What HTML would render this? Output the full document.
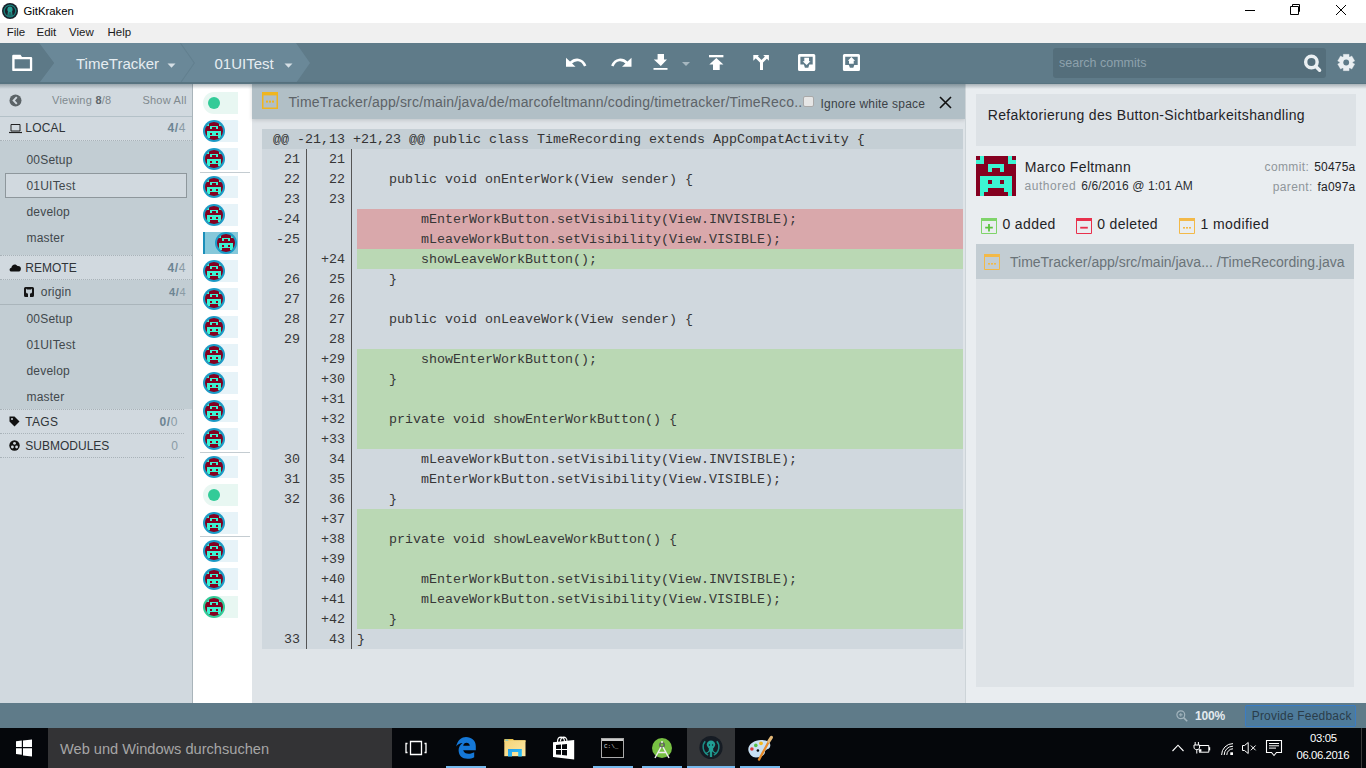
<!DOCTYPE html><html><head><meta charset="utf-8"><style>
*{margin:0;padding:0;box-sizing:border-box}
html,body{width:1366px;height:768px;overflow:hidden;background:#fff;font-family:"Liberation Sans",sans-serif}
.a{position:absolute}
.t{position:absolute;white-space:nowrap;line-height:1}
svg{position:absolute;overflow:visible}
</style></head><body>
<svg width="0" height="0" style="position:absolute"><defs><symbol id="rob" viewBox="0 0 10 10" shape-rendering="crispEdges"><rect width="10" height="10" fill="#850020"/><rect x="1" y="0" width="1" height="1" fill="#3cf4d2"/><rect x="8" y="0" width="1" height="1" fill="#3cf4d2"/><rect x="0" y="1" width="2" height="1" fill="#3cf4d2"/><rect x="8" y="1" width="2" height="1" fill="#3cf4d2"/><rect x="3" y="2" width="4" height="1" fill="#3cf4d2"/><rect x="3" y="3" width="1" height="1" fill="#3cf4d2"/><rect x="6" y="3" width="1" height="1" fill="#3cf4d2"/><rect x="1" y="5" width="8" height="1" fill="#3cf4d2"/><rect x="1" y="6" width="2" height="1" fill="#3cf4d2"/><rect x="4" y="6" width="2" height="1" fill="#3cf4d2"/><rect x="7" y="6" width="2" height="1" fill="#3cf4d2"/><rect x="1" y="7" width="8" height="1" fill="#3cf4d2"/><rect x="1" y="8" width="2" height="1" fill="#3cf4d2"/><rect x="7" y="8" width="2" height="1" fill="#3cf4d2"/><rect x="1" y="9" width="1" height="1" fill="#3cf4d2"/><rect x="8" y="9" width="1" height="1" fill="#3cf4d2"/></symbol></defs></svg>
<div class="a" style="left:0;top:0;width:1366px;height:23px;background:#fff"></div>
<svg style="left:2px;top:3px" width="16" height="16" viewBox="0 0 16 16"><circle cx="8" cy="8" r="8" fill="#19202b"/><circle cx="8" cy="8" r="5.8" fill="none" stroke="#17807a" stroke-width="1.3"/><ellipse cx="8" cy="6.6" rx="2.6" ry="3" fill="#27a096"/><path d="M6.4 9 L6 13 M8 9.5 V13.5 M9.6 9 L10 13" stroke="#27a096" stroke-width="1.1"/></svg>
<div class="t" style="left:23.5px;top:6.33px;font-size:11.3px;color:#000;">GitKraken</div>
<div class="a" style="left:1245px;top:10px;width:10px;height:1px;background:#000"></div>
<svg style="left:1289px;top:3px" width="12" height="13" viewBox="0 0 12 13"><path d="M1.5 3.5h8v8h-8z M3.5 3.5V1.5h7v7h-1" fill="none" stroke="#000" stroke-width="1"/></svg>
<svg style="left:1336px;top:5px" width="10" height="10" viewBox="0 0 10 10"><path d="M0 0L10 10M10 0L0 10" stroke="#000" stroke-width="1"/></svg>
<div class="a" style="left:0;top:23px;width:1366px;height:20px;background:#f0f0f0"></div>
<div class="t" style="left:6.7px;top:26.97px;font-size:11.5px;color:#1a1a1a;">File</div>
<div class="t" style="left:36.5px;top:26.97px;font-size:11.5px;color:#1a1a1a;">Edit</div>
<div class="t" style="left:69px;top:26.97px;font-size:11.5px;color:#1a1a1a;">View</div>
<div class="t" style="left:107.5px;top:26.97px;font-size:11.5px;color:#1a1a1a;">Help</div>
<div class="a" style="left:0;top:43px;width:1366px;height:40px;background:#5f7b89"></div>
<svg style="left:0;top:43px" width="320" height="40" viewBox="0 0 320 40"><polygon points="39,0 180,0 194,20 180,40 39,40 54,20" fill="#6a8898"/><polygon points="180,0 296,0 310,20 296,40 180,40 194,20" fill="#6a8898"/><polygon points="0,0 39,0 54,20 39,40 0,40" fill="#5d7987"/><path d="M180.5,0 L194.5,20 L180.5,40" fill="none" stroke="#62808f" stroke-width="1"/><rect x="0" y="39" width="320" height="1" fill="#587481"/></svg>
<svg style="left:0;top:0" width="60" height="83" viewBox="0 0 60 83"><path d="M12.2 56 Q12.2 54.8 13.4 54.8 H20.5 L22 56.9 H31 Q32.2 56.9 32.2 58.1 V69.9 Q32.2 71.1 31 71.1 H13.4 Q12.2 71.1 12.2 69.9 Z M14.6 59.2 H29.9 V68.6 H14.6 Z" fill="#fff" fill-rule="evenodd"/></svg>
<div class="t" style="left:76px;top:56.10px;font-size:15px;color:#e6edf1;">TimeTracker</div>
<svg style="left:166.7px;top:62.8px" width="10" height="6" viewBox="0 0 10 6"><path d="M0.5 0.5H8.5L4.5 4.8Z" fill="#d5dfe5"/></svg>
<div class="t" style="left:214.5px;top:56.10px;font-size:15px;color:#e6edf1;">01UITest</div>
<svg style="left:284px;top:62.8px" width="10" height="6" viewBox="0 0 10 6"><path d="M0.5 0.5H8.5L4.5 4.8Z" fill="#d5dfe5"/></svg>
<svg style="left:0;top:0" width="1366" height="83" viewBox="0 0 1366 83"><path d="M566 57.8 V66.7 H575.5 Z" fill="#fff"/><path d="M570.5 63 C575 58.5 582 58.5 585.2 66" fill="none" stroke="#fff" stroke-width="2.6"/><path d="M631.5 57.8 V66.7 H622 Z" fill="#fff"/><path d="M627 63 C622.5 58.5 615.5 58.5 612.3 66" fill="none" stroke="#fff" stroke-width="2.6"/><path d="M657.6 54 H664 V59.5 H667 L660.8 66 L653.8 59.5 H657.6 Z" fill="#fff"/><rect x="653.5" y="68" width="14" height="1.8" fill="#fff"/><path d="M682 62 H690 L686 66 Z" fill="#a6b7c0"/><rect x="709" y="55" width="14.4" height="2.3" fill="#fff"/><path d="M716.3 58 L723.4 64.5 H719.7 V70 H713 V64.5 H709.3 Z" fill="#fff"/><path d="M761.5 70 V62 L756 56.5 M762 61.5 L767.5 56" fill="none" stroke="#fff" stroke-width="3"/><path d="M753.3 55 H759 L753.3 60.7 Z M768.9 55 H763.2 L768.9 60.7 Z" fill="#fff"/><path d="M799.5 54 H813.8 Q815.3 54 815.3 55.5 V69.5 Q815.3 71 813.8 71 H799.5 Q798 71 798 69.5 V55.5 Q798 54 799.5 54 Z M800.4 56.8 V64.6 H803.9 L804.9 67.7 H808.3 L809.3 64.6 H812.7 V56.8 Z" fill="#fff" fill-rule="evenodd"/><path d="M804.3 57.8 H809 V61.2 H810.5 L806.6 65 L802.6 61.2 H804.3 Z" fill="#fff"/><path d="M844.4 54 H858.5 Q860 54 860 55.5 V69.5 Q860 71 858.5 71 H844.4 Q842.9 71 842.9 69.5 V55.5 Q842.9 54 844.4 54 Z M845.2 56.8 V65 H848.9 L849.9 67.7 H853.3 L854.3 65 H857.7 V56.8 Z" fill="#fff" fill-rule="evenodd"/><path d="M849 63.7 H853.7 V60.7 H855.1 L851.4 57 L847.8 60.7 H849 Z" fill="#fff"/></svg>
<div class="a" style="left:1053px;top:48px;width:273px;height:30px;background:#546e7b;border-radius:3px"></div>
<div class="t" style="left:1059px;top:57.42px;font-size:12.5px;color:#8ea2ad;">search commits</div>
<svg style="left:1300px;top:50px" width="26" height="26" viewBox="1300 50 26 26"><circle cx="1311.4" cy="62" r="5.75" fill="none" stroke="#eaeff2" stroke-width="3.4"/><path d="M1315.6 66.2 L1319.6 70.2" stroke="#eaeff2" stroke-width="3.4" stroke-linecap="round"/></svg>
<svg style="left:1330px;top:48px" width="30" height="30" viewBox="1330 48 30 30"><polygon points="1343.30,56.68 1343.30,54.30 1349.10,54.30 1349.10,56.68 1349.79,57.08 1351.85,55.89 1354.75,60.91 1352.69,62.10 1352.69,62.90 1354.75,64.09 1351.85,69.11 1349.79,67.92 1349.10,68.32 1349.10,70.70 1343.30,70.70 1343.30,68.32 1342.61,67.92 1340.55,69.11 1337.65,64.09 1339.71,62.90 1339.71,62.10 1337.65,60.91 1340.55,55.89 1342.61,57.08" fill="#eaeff2" stroke="#eaeff2" stroke-width="0.3" stroke-linejoin="round"/><circle cx="1346.2" cy="62.5" r="2.9" fill="#5f7b89"/></svg>
<div class="a" style="left:0;top:83px;width:1366px;height:1px;background:#587481;z-index:6"></div>
<div class="a" style="left:0;top:84px;width:1366px;height:5px;background:linear-gradient(rgba(40,60,70,0.33),rgba(40,60,70,0));z-index:5"></div>
<div class="a" style="left:0;top:83px;width:192px;height:620px;background:#d1d9df"></div>
<div class="a" style="left:192px;top:83px;width:1px;height:620px;background:#a9b4ba"></div>
<svg style="left:9px;top:94px" width="13" height="13" viewBox="0 0 13 13"><circle cx="6.5" cy="6.5" r="6" fill="#5b6367"/><path d="M7.8 3.2 L4.6 6.5 L7.8 9.8" fill="none" stroke="#d1d9df" stroke-width="1.9"/></svg>
<div class="t" style="left:52px;top:94.79px;font-size:11px;color:#80898e;letter-spacing:0.25px">Viewing <b style="color:#5f676b">8</b>/8</div>
<div class="t" style="right:1179.4px;top:94.79px;font-size:11px;color:#80898e;letter-spacing:0.25px">Show All</div>
<div class="a" style="left:0;top:116px;width:192px;height:1px;background:#b4c1c8"></div>
<svg style="left:9px;top:123px" width="13" height="11" viewBox="0 0 13 11"><path d="M2 1.5H11V8H2Z" fill="none" stroke="#222" stroke-width="1"/><path d="M0 9.5H13" stroke="#222" stroke-width="1.2"/></svg>
<div class="t" style="left:25.3px;top:122.34px;font-size:12px;color:#2f3438;letter-spacing:0.2px">LOCAL</div>
<div class="t" style="right:1180px;top:122.34px;font-size:12px;color:#8a9ba5;letter-spacing:0.6px"><b style="color:#6d8593">4/</b>4</div>
<div class="a" style="left:0;top:140px;width:192px;height:1px;border-top:1px dotted #a9b3b9"></div>
<div class="a" style="left:0;top:141px;width:192px;height:114px;background:#c2cdd3"></div>
<div class="a" style="left:5px;top:173px;width:182px;height:25px;background:#d1d9df;border:1px solid #8e979c"></div>
<div class="t" style="left:26.5px;top:153.84px;font-size:12px;color:#41484c;letter-spacing:0.2px">00Setup</div>
<div class="t" style="left:26.5px;top:179.84px;font-size:12px;color:#41484c;letter-spacing:0.2px">01UITest</div>
<div class="t" style="left:26.5px;top:205.84px;font-size:12px;color:#41484c;letter-spacing:0.2px">develop</div>
<div class="t" style="left:26.5px;top:231.84px;font-size:12px;color:#41484c;letter-spacing:0.2px">master</div>
<div class="a" style="left:0;top:255px;width:192px;height:1px;border-top:1px dotted #a9b3b9"></div>
<svg style="left:9px;top:263px" width="12" height="9" viewBox="0 0 12 9"><path d="M2.6 8.6 C0 8.6 0 5 2.4 4.8 C2.5 1.5 6.6 0 8.6 3 C11 2.8 12.4 4.6 11.8 6.4 C11.6 7.8 10.6 8.6 9.6 8.6Z" fill="#111"/></svg>
<div class="t" style="left:25.3px;top:261.94px;font-size:12px;color:#2f3438;">REMOTE</div>
<div class="t" style="right:1180px;top:261.94px;font-size:12px;color:#8a9ba5;letter-spacing:0.6px"><b style="color:#6d8593">4/</b>4</div>
<div class="a" style="left:0;top:279px;width:192px;height:1px;border-top:1px dotted #a9b3b9"></div>
<div class="a" style="left:0;top:280px;width:192px;height:129px;background:#c2cdd3"></div>
<div class="a" style="left:0;top:304px;width:192px;height:1px;background:#aab5bb"></div>
<svg style="left:24px;top:287px" width="10" height="10" viewBox="0 0 10 10"><path d="M1.5 0 H8.5 Q10 0 10 1.5 V8.5 Q10 10 8.5 10 H1.5 Q0 10 0 8.5 V1.5 Q0 0 1.5 0 Z M2 1.6 L2.9 2.4 H7.1 L8 1.6 V5 C8 6.2 6.8 6.6 6 6.6 V10 H4 V6.6 C3.2 6.6 2 6.2 2 5 Z" fill="#151515" fill-rule="evenodd"/></svg>
<div class="t" style="left:40.8px;top:285.84px;font-size:12px;color:#41484c;letter-spacing:0.2px">origin</div>
<div class="t" style="right:1179.8px;top:286.69px;font-size:11px;color:#8a9ba5;letter-spacing:0.6px"><b style="color:#6d8593">4/</b>4</div>
<div class="t" style="left:26.5px;top:312.84px;font-size:12px;color:#41484c;letter-spacing:0.2px">00Setup</div>
<div class="t" style="left:26.5px;top:338.84px;font-size:12px;color:#41484c;letter-spacing:0.2px">01UITest</div>
<div class="t" style="left:26.5px;top:364.84px;font-size:12px;color:#41484c;letter-spacing:0.2px">develop</div>
<div class="t" style="left:26.5px;top:390.84px;font-size:12px;color:#41484c;letter-spacing:0.2px">master</div>
<div class="a" style="left:0;top:409px;width:184px;height:1px;border-top:1px dotted #a9b3b9"></div>
<svg style="left:9px;top:416px" width="11" height="11" viewBox="0 0 11 11"><path d="M0.5 0.5H5.5L10.5 5.5L5.5 10.5L0.5 5.5Z" fill="#111"/><circle cx="3" cy="3" r="1" fill="#d1d9df"/></svg>
<div class="t" style="left:25.3px;top:415.84px;font-size:12px;color:#2f3438;letter-spacing:0.3px">TAGS</div>
<div class="t" style="right:1188px;top:415.84px;font-size:12px;color:#8a9ba5;letter-spacing:0.6px"><b style="color:#6d8593">0/</b>0</div>
<div class="a" style="left:0;top:433px;width:184px;height:1px;border-top:1px dotted #a9b3b9"></div>
<svg style="left:9px;top:440px" width="11" height="11" viewBox="0 0 11 11"><circle cx="5.5" cy="5.5" r="5.2" fill="#111"/><circle cx="5.5" cy="3.3" r="1.4" fill="#d1d9df"/><circle cx="3.4" cy="7" r="1.4" fill="#d1d9df"/><circle cx="7.6" cy="7" r="1.4" fill="#d1d9df"/></svg>
<div class="t" style="left:25.3px;top:439.84px;font-size:12px;color:#2f3438;">SUBMODULES</div>
<div class="t" style="right:1188px;top:439.84px;font-size:12px;color:#8a9ba5;">0</div>
<div class="a" style="left:0;top:457px;width:184px;height:1px;border-top:1px dotted #a9b3b9"></div>
<div class="a" style="left:193px;top:83px;width:59px;height:620px;background:#fff"></div>
<div class="a" style="left:203px;top:92px;width:35px;height:22px;background:#e8f7f2;border-radius:11px 0 0 11px"></div>
<div class="a" style="left:208px;top:97px;width:12px;height:12px;border-radius:50%;background:#33cb98"></div>
<div class="a" style="left:214px;top:120px;width:24px;height:22px;background:#e7f3f8"></div>
<div class="a" style="left:203px;top:120px;width:22px;height:22px;border-radius:50%;background:#1b9bc7;overflow:hidden"><div class="a" style="left:2px;top:2px;width:18px;height:18px;border-radius:50%;overflow:hidden"><svg style="left:0;top:0" width="18" height="18"><use href="#rob"/></svg></div></div>
<div class="a" style="left:214px;top:148px;width:24px;height:22px;background:#e7f3f8"></div>
<div class="a" style="left:203px;top:148px;width:22px;height:22px;border-radius:50%;background:#1b9bc7;overflow:hidden"><div class="a" style="left:2px;top:2px;width:18px;height:18px;border-radius:50%;overflow:hidden"><svg style="left:0;top:0" width="18" height="18"><use href="#rob"/></svg></div></div>
<div class="a" style="left:214px;top:176px;width:24px;height:22px;background:#e7f3f8"></div>
<div class="a" style="left:203px;top:176px;width:22px;height:22px;border-radius:50%;background:#1b9bc7;overflow:hidden"><div class="a" style="left:2px;top:2px;width:18px;height:18px;border-radius:50%;overflow:hidden"><svg style="left:0;top:0" width="18" height="18"><use href="#rob"/></svg></div></div>
<div class="a" style="left:214px;top:204px;width:24px;height:22px;background:#e7f3f8"></div>
<div class="a" style="left:203px;top:204px;width:22px;height:22px;border-radius:50%;background:#1b9bc7;overflow:hidden"><div class="a" style="left:2px;top:2px;width:18px;height:18px;border-radius:50%;overflow:hidden"><svg style="left:0;top:0" width="18" height="18"><use href="#rob"/></svg></div></div>
<div class="a" style="left:203px;top:232px;width:35px;height:22px;background:#86c8da;border-left:2px solid #1b8fba"></div>
<div class="a" style="left:215px;top:232px;width:22px;height:22px;border-radius:50%;background:#1b9bc7;overflow:hidden"><div class="a" style="left:2px;top:2px;width:18px;height:18px;border-radius:50%;overflow:hidden"><svg style="left:0;top:0" width="18" height="18"><use href="#rob"/></svg></div></div>
<div class="a" style="left:214px;top:260px;width:24px;height:22px;background:#e7f3f8"></div>
<div class="a" style="left:203px;top:260px;width:22px;height:22px;border-radius:50%;background:#1b9bc7;overflow:hidden"><div class="a" style="left:2px;top:2px;width:18px;height:18px;border-radius:50%;overflow:hidden"><svg style="left:0;top:0" width="18" height="18"><use href="#rob"/></svg></div></div>
<div class="a" style="left:214px;top:288px;width:24px;height:22px;background:#e7f3f8"></div>
<div class="a" style="left:203px;top:288px;width:22px;height:22px;border-radius:50%;background:#1b9bc7;overflow:hidden"><div class="a" style="left:2px;top:2px;width:18px;height:18px;border-radius:50%;overflow:hidden"><svg style="left:0;top:0" width="18" height="18"><use href="#rob"/></svg></div></div>
<div class="a" style="left:214px;top:316px;width:24px;height:22px;background:#e7f3f8"></div>
<div class="a" style="left:203px;top:316px;width:22px;height:22px;border-radius:50%;background:#1b9bc7;overflow:hidden"><div class="a" style="left:2px;top:2px;width:18px;height:18px;border-radius:50%;overflow:hidden"><svg style="left:0;top:0" width="18" height="18"><use href="#rob"/></svg></div></div>
<div class="a" style="left:214px;top:344px;width:24px;height:22px;background:#e7f3f8"></div>
<div class="a" style="left:203px;top:344px;width:22px;height:22px;border-radius:50%;background:#1b9bc7;overflow:hidden"><div class="a" style="left:2px;top:2px;width:18px;height:18px;border-radius:50%;overflow:hidden"><svg style="left:0;top:0" width="18" height="18"><use href="#rob"/></svg></div></div>
<div class="a" style="left:214px;top:372px;width:24px;height:22px;background:#e7f3f8"></div>
<div class="a" style="left:203px;top:372px;width:22px;height:22px;border-radius:50%;background:#1b9bc7;overflow:hidden"><div class="a" style="left:2px;top:2px;width:18px;height:18px;border-radius:50%;overflow:hidden"><svg style="left:0;top:0" width="18" height="18"><use href="#rob"/></svg></div></div>
<div class="a" style="left:214px;top:400px;width:24px;height:22px;background:#e7f3f8"></div>
<div class="a" style="left:203px;top:400px;width:22px;height:22px;border-radius:50%;background:#1b9bc7;overflow:hidden"><div class="a" style="left:2px;top:2px;width:18px;height:18px;border-radius:50%;overflow:hidden"><svg style="left:0;top:0" width="18" height="18"><use href="#rob"/></svg></div></div>
<div class="a" style="left:214px;top:428px;width:24px;height:22px;background:#e7f3f8"></div>
<div class="a" style="left:203px;top:428px;width:22px;height:22px;border-radius:50%;background:#1b9bc7;overflow:hidden"><div class="a" style="left:2px;top:2px;width:18px;height:18px;border-radius:50%;overflow:hidden"><svg style="left:0;top:0" width="18" height="18"><use href="#rob"/></svg></div></div>
<div class="a" style="left:214px;top:456px;width:24px;height:22px;background:#e7f3f8"></div>
<div class="a" style="left:203px;top:456px;width:22px;height:22px;border-radius:50%;background:#1b9bc7;overflow:hidden"><div class="a" style="left:2px;top:2px;width:18px;height:18px;border-radius:50%;overflow:hidden"><svg style="left:0;top:0" width="18" height="18"><use href="#rob"/></svg></div></div>
<div class="a" style="left:203px;top:484px;width:35px;height:22px;background:#e8f7f2;border-radius:11px 0 0 11px"></div>
<div class="a" style="left:208px;top:489px;width:12px;height:12px;border-radius:50%;background:#33cb98"></div>
<div class="a" style="left:214px;top:512px;width:24px;height:22px;background:#e7f3f8"></div>
<div class="a" style="left:203px;top:512px;width:22px;height:22px;border-radius:50%;background:#1b9bc7;overflow:hidden"><div class="a" style="left:2px;top:2px;width:18px;height:18px;border-radius:50%;overflow:hidden"><svg style="left:0;top:0" width="18" height="18"><use href="#rob"/></svg></div></div>
<div class="a" style="left:214px;top:540px;width:24px;height:22px;background:#e7f3f8"></div>
<div class="a" style="left:203px;top:540px;width:22px;height:22px;border-radius:50%;background:#1b9bc7;overflow:hidden"><div class="a" style="left:2px;top:2px;width:18px;height:18px;border-radius:50%;overflow:hidden"><svg style="left:0;top:0" width="18" height="18"><use href="#rob"/></svg></div></div>
<div class="a" style="left:214px;top:568px;width:24px;height:22px;background:#e7f3f8"></div>
<div class="a" style="left:203px;top:568px;width:22px;height:22px;border-radius:50%;background:#1b9bc7;overflow:hidden"><div class="a" style="left:2px;top:2px;width:18px;height:18px;border-radius:50%;overflow:hidden"><svg style="left:0;top:0" width="18" height="18"><use href="#rob"/></svg></div></div>
<div class="a" style="left:214px;top:596px;width:24px;height:22px;background:#e8f7f2"></div>
<div class="a" style="left:203px;top:596px;width:22px;height:22px;border-radius:50%;background:#33cb98;overflow:hidden"><div class="a" style="left:2px;top:2px;width:18px;height:18px;border-radius:50%;overflow:hidden"><svg style="left:0;top:0" width="18" height="18"><use href="#rob"/></svg></div></div>
<div class="a" style="left:200px;top:172px;width:50px;height:1px;background:#c4ccd1"></div>
<div class="a" style="left:200px;top:452px;width:50px;height:1px;background:#c4ccd1"></div>
<div class="a" style="left:200px;top:536px;width:50px;height:1px;background:#c4ccd1"></div>
<div class="a" style="left:252px;top:83px;width:713px;height:620px;background:#dfe4e8"></div>
<div class="a" style="left:252px;top:83px;width:713px;height:36px;background:#b1bfc6;box-shadow:0 1px 4px rgba(0,0,0,0.15)"></div>
<svg style="left:262px;top:92px" width="16" height="17" viewBox="0 0 16 17"><path d="M0.75 0.75H15.25V16.25H0.75Z" fill="none" stroke="#f0b51e" stroke-width="1.5"/><rect x="0" y="0" width="16" height="3.4" fill="#f0b51e"/><rect x="4" y="8.6" width="2" height="2" fill="#f0b51e"/><rect x="7" y="8.6" width="2" height="2" fill="#f0b51e"/><rect x="10" y="8.6" width="2" height="2" fill="#f0b51e"/></svg>
<div class="t" style="left:288.4px;top:94.85px;font-size:14px;color:#5d6368;letter-spacing:0.18px">TimeTracker/app/src/main/java/de/marcofeltmann/coding/timetracker/TimeReco..</div>
<div class="a" style="left:802.5px;top:95.6px;width:11.2px;height:11.2px;background:#e6e6e6;border:1px solid #a9a9a9;border-radius:2px"></div>
<div class="t" style="left:820.5px;top:97.84px;font-size:12px;color:#3c4246;letter-spacing:0.22px">Ignore white space</div>
<svg style="left:939px;top:95.5px" width="13" height="13" viewBox="0 0 13 13"><path d="M1 1L12 12M12 1L1 12" stroke="#111" stroke-width="1.6"/></svg>
<div class="a" style="left:262px;top:129px;width:701px;height:20px;background:#c5cfd5"></div>
<div class="t" style="left:273px;top:133px;font-family:'Liberation Mono',monospace;font-size:13.333px;color:#333">@@ -21,13 +21,23 @@ public class TimeRecording extends AppCompatActivity {</div>
<div class="a" style="left:262px;top:149px;width:701px;height:500px;background:#d0d8de"></div>
<div class="t" style="left:262px;top:153px;width:38px;text-align:right;font-family:'Liberation Mono',monospace;font-size:13.333px;color:#363636">21</div>
<div class="t" style="left:307px;top:153px;width:38px;text-align:right;font-family:'Liberation Mono',monospace;font-size:13.333px;color:#363636">21</div>
<div class="t" style="left:262px;top:173px;width:38px;text-align:right;font-family:'Liberation Mono',monospace;font-size:13.333px;color:#363636">22</div>
<div class="t" style="left:307px;top:173px;width:38px;text-align:right;font-family:'Liberation Mono',monospace;font-size:13.333px;color:#363636">22</div>
<div class="t" style="left:357px;top:173px;font-family:'Liberation Mono',monospace;font-size:13.333px;color:#363636;white-space:pre">    public void onEnterWork(View sender) {</div>
<div class="t" style="left:262px;top:193px;width:38px;text-align:right;font-family:'Liberation Mono',monospace;font-size:13.333px;color:#363636">23</div>
<div class="t" style="left:307px;top:193px;width:38px;text-align:right;font-family:'Liberation Mono',monospace;font-size:13.333px;color:#363636">23</div>
<div class="a" style="left:357px;top:209px;width:606px;height:20px;background:#d9a8ab"></div>
<div class="t" style="left:262px;top:213px;width:38px;text-align:right;font-family:'Liberation Mono',monospace;font-size:13.333px;color:#363636">-24</div>
<div class="t" style="left:357px;top:213px;font-family:'Liberation Mono',monospace;font-size:13.333px;color:#363636;white-space:pre">        mEnterWorkButton.setVisibility(View.INVISIBLE);</div>
<div class="a" style="left:357px;top:229px;width:606px;height:20px;background:#d9a8ab"></div>
<div class="t" style="left:262px;top:233px;width:38px;text-align:right;font-family:'Liberation Mono',monospace;font-size:13.333px;color:#363636">-25</div>
<div class="t" style="left:357px;top:233px;font-family:'Liberation Mono',monospace;font-size:13.333px;color:#363636;white-space:pre">        mLeaveWorkButton.setVisibility(View.VISIBLE);</div>
<div class="a" style="left:357px;top:249px;width:606px;height:20px;background:#bad8b4"></div>
<div class="t" style="left:307px;top:253px;width:38px;text-align:right;font-family:'Liberation Mono',monospace;font-size:13.333px;color:#363636">+24</div>
<div class="t" style="left:357px;top:253px;font-family:'Liberation Mono',monospace;font-size:13.333px;color:#363636;white-space:pre">        showLeaveWorkButton();</div>
<div class="t" style="left:262px;top:273px;width:38px;text-align:right;font-family:'Liberation Mono',monospace;font-size:13.333px;color:#363636">26</div>
<div class="t" style="left:307px;top:273px;width:38px;text-align:right;font-family:'Liberation Mono',monospace;font-size:13.333px;color:#363636">25</div>
<div class="t" style="left:357px;top:273px;font-family:'Liberation Mono',monospace;font-size:13.333px;color:#363636;white-space:pre">    }</div>
<div class="t" style="left:262px;top:293px;width:38px;text-align:right;font-family:'Liberation Mono',monospace;font-size:13.333px;color:#363636">27</div>
<div class="t" style="left:307px;top:293px;width:38px;text-align:right;font-family:'Liberation Mono',monospace;font-size:13.333px;color:#363636">26</div>
<div class="t" style="left:262px;top:313px;width:38px;text-align:right;font-family:'Liberation Mono',monospace;font-size:13.333px;color:#363636">28</div>
<div class="t" style="left:307px;top:313px;width:38px;text-align:right;font-family:'Liberation Mono',monospace;font-size:13.333px;color:#363636">27</div>
<div class="t" style="left:357px;top:313px;font-family:'Liberation Mono',monospace;font-size:13.333px;color:#363636;white-space:pre">    public void onLeaveWork(View sender) {</div>
<div class="t" style="left:262px;top:333px;width:38px;text-align:right;font-family:'Liberation Mono',monospace;font-size:13.333px;color:#363636">29</div>
<div class="t" style="left:307px;top:333px;width:38px;text-align:right;font-family:'Liberation Mono',monospace;font-size:13.333px;color:#363636">28</div>
<div class="a" style="left:357px;top:349px;width:606px;height:20px;background:#bad8b4"></div>
<div class="t" style="left:307px;top:353px;width:38px;text-align:right;font-family:'Liberation Mono',monospace;font-size:13.333px;color:#363636">+29</div>
<div class="t" style="left:357px;top:353px;font-family:'Liberation Mono',monospace;font-size:13.333px;color:#363636;white-space:pre">        showEnterWorkButton();</div>
<div class="a" style="left:357px;top:369px;width:606px;height:20px;background:#bad8b4"></div>
<div class="t" style="left:307px;top:373px;width:38px;text-align:right;font-family:'Liberation Mono',monospace;font-size:13.333px;color:#363636">+30</div>
<div class="t" style="left:357px;top:373px;font-family:'Liberation Mono',monospace;font-size:13.333px;color:#363636;white-space:pre">    }</div>
<div class="a" style="left:357px;top:389px;width:606px;height:20px;background:#bad8b4"></div>
<div class="t" style="left:307px;top:393px;width:38px;text-align:right;font-family:'Liberation Mono',monospace;font-size:13.333px;color:#363636">+31</div>
<div class="a" style="left:357px;top:409px;width:606px;height:20px;background:#bad8b4"></div>
<div class="t" style="left:307px;top:413px;width:38px;text-align:right;font-family:'Liberation Mono',monospace;font-size:13.333px;color:#363636">+32</div>
<div class="t" style="left:357px;top:413px;font-family:'Liberation Mono',monospace;font-size:13.333px;color:#363636;white-space:pre">    private void showEnterWorkButton() {</div>
<div class="a" style="left:357px;top:429px;width:606px;height:20px;background:#bad8b4"></div>
<div class="t" style="left:307px;top:433px;width:38px;text-align:right;font-family:'Liberation Mono',monospace;font-size:13.333px;color:#363636">+33</div>
<div class="t" style="left:262px;top:453px;width:38px;text-align:right;font-family:'Liberation Mono',monospace;font-size:13.333px;color:#363636">30</div>
<div class="t" style="left:307px;top:453px;width:38px;text-align:right;font-family:'Liberation Mono',monospace;font-size:13.333px;color:#363636">34</div>
<div class="t" style="left:357px;top:453px;font-family:'Liberation Mono',monospace;font-size:13.333px;color:#363636;white-space:pre">        mLeaveWorkButton.setVisibility(View.INVISIBLE);</div>
<div class="t" style="left:262px;top:473px;width:38px;text-align:right;font-family:'Liberation Mono',monospace;font-size:13.333px;color:#363636">31</div>
<div class="t" style="left:307px;top:473px;width:38px;text-align:right;font-family:'Liberation Mono',monospace;font-size:13.333px;color:#363636">35</div>
<div class="t" style="left:357px;top:473px;font-family:'Liberation Mono',monospace;font-size:13.333px;color:#363636;white-space:pre">        mEnterWorkButton.setVisibility(View.VISIBLE);</div>
<div class="t" style="left:262px;top:493px;width:38px;text-align:right;font-family:'Liberation Mono',monospace;font-size:13.333px;color:#363636">32</div>
<div class="t" style="left:307px;top:493px;width:38px;text-align:right;font-family:'Liberation Mono',monospace;font-size:13.333px;color:#363636">36</div>
<div class="t" style="left:357px;top:493px;font-family:'Liberation Mono',monospace;font-size:13.333px;color:#363636;white-space:pre">    }</div>
<div class="a" style="left:357px;top:509px;width:606px;height:20px;background:#bad8b4"></div>
<div class="t" style="left:307px;top:513px;width:38px;text-align:right;font-family:'Liberation Mono',monospace;font-size:13.333px;color:#363636">+37</div>
<div class="a" style="left:357px;top:529px;width:606px;height:20px;background:#bad8b4"></div>
<div class="t" style="left:307px;top:533px;width:38px;text-align:right;font-family:'Liberation Mono',monospace;font-size:13.333px;color:#363636">+38</div>
<div class="t" style="left:357px;top:533px;font-family:'Liberation Mono',monospace;font-size:13.333px;color:#363636;white-space:pre">    private void showLeaveWorkButton() {</div>
<div class="a" style="left:357px;top:549px;width:606px;height:20px;background:#bad8b4"></div>
<div class="t" style="left:307px;top:553px;width:38px;text-align:right;font-family:'Liberation Mono',monospace;font-size:13.333px;color:#363636">+39</div>
<div class="a" style="left:357px;top:569px;width:606px;height:20px;background:#bad8b4"></div>
<div class="t" style="left:307px;top:573px;width:38px;text-align:right;font-family:'Liberation Mono',monospace;font-size:13.333px;color:#363636">+40</div>
<div class="t" style="left:357px;top:573px;font-family:'Liberation Mono',monospace;font-size:13.333px;color:#363636;white-space:pre">        mEnterWorkButton.setVisibility(View.INVISIBLE);</div>
<div class="a" style="left:357px;top:589px;width:606px;height:20px;background:#bad8b4"></div>
<div class="t" style="left:307px;top:593px;width:38px;text-align:right;font-family:'Liberation Mono',monospace;font-size:13.333px;color:#363636">+41</div>
<div class="t" style="left:357px;top:593px;font-family:'Liberation Mono',monospace;font-size:13.333px;color:#363636;white-space:pre">        mLeaveWorkButton.setVisibility(View.VISIBLE);</div>
<div class="a" style="left:357px;top:609px;width:606px;height:20px;background:#bad8b4"></div>
<div class="t" style="left:307px;top:613px;width:38px;text-align:right;font-family:'Liberation Mono',monospace;font-size:13.333px;color:#363636">+42</div>
<div class="t" style="left:357px;top:613px;font-family:'Liberation Mono',monospace;font-size:13.333px;color:#363636;white-space:pre">    }</div>
<div class="t" style="left:262px;top:633px;width:38px;text-align:right;font-family:'Liberation Mono',monospace;font-size:13.333px;color:#363636">33</div>
<div class="t" style="left:307px;top:633px;width:38px;text-align:right;font-family:'Liberation Mono',monospace;font-size:13.333px;color:#363636">43</div>
<div class="t" style="left:357px;top:633px;font-family:'Liberation Mono',monospace;font-size:13.333px;color:#363636;white-space:pre">}</div>
<div class="a" style="left:306px;top:149px;width:1px;height:500px;background:#555"></div>
<div class="a" style="left:351px;top:149px;width:1px;height:500px;background:#555"></div>
<div class="a" style="left:965px;top:83px;width:401px;height:620px;background:#e9edf0;border-left:1px solid #cdd4d8"></div>
<div class="a" style="left:976px;top:94px;width:380px;height:52px;background:#dde2e6"></div>
<div class="t" style="left:987.7px;top:107.95px;font-size:14px;color:#1f2326;letter-spacing:0.36px">Refaktorierung des Button-Sichtbarkeitshandling</div>
<svg style="left:976px;top:156px" width="40" height="40" viewBox="0 0 10 10"><use href="#rob"/></svg>
<div class="t" style="left:1024.8px;top:160.15px;font-size:14px;color:#1f2326;letter-spacing:0.37px">Marco Feltmann</div>
<div class="t" style="left:1024.5px;top:180.14px;font-size:12px;color:#8f969b;letter-spacing:0.55px">authored</div>
<div class="t" style="left:1081.2px;top:180.14px;font-size:12px;color:#2a2e31;letter-spacing:0.12px">6/6/2016 @ 1:01 AM</div>
<div class="t" style="right:56.700000000000045px;top:160.74px;font-size:12px;color:#8f969b;letter-spacing:0.4px">commit:</div>
<div class="t" style="right:10.599999999999909px;top:160.74px;font-size:12px;color:#1f2326;letter-spacing:0.2px">50475a</div>
<div class="t" style="right:53.200000000000045px;top:180.74px;font-size:12px;color:#8f969b;letter-spacing:0.4px">parent:</div>
<div class="t" style="right:10.599999999999909px;top:180.74px;font-size:12px;color:#1f2326;letter-spacing:0.2px">fa097a</div>
<svg style="left:981px;top:218px" width="16" height="16" viewBox="0 0 16 16"><path d="M0.5 0.5H15.5V15.5H0.5Z" fill="none" stroke="#7fd46a" stroke-width="1"/><rect x="0" y="0" width="16" height="3" fill="#7fd46a"/><path d="M8 6V13.5M4.2 9.7H11.8" stroke="#5cc23e" stroke-width="1.8"/></svg>
<div class="t" style="left:1002.4px;top:216.85px;font-size:14px;color:#1f2326;letter-spacing:0.4px">0 added</div>
<svg style="left:1076px;top:218px" width="16" height="16" viewBox="0 0 16 16"><path d="M0.5 0.5H15.5V15.5H0.5Z" fill="none" stroke="#e8304c" stroke-width="1"/><rect x="0" y="0" width="16" height="3" fill="#e8304c"/><path d="M4.2 9.7H11.8" stroke="#e8304c" stroke-width="1.8"/></svg>
<div class="t" style="left:1097.2px;top:216.85px;font-size:14px;color:#1f2326;letter-spacing:0.35px">0 deleted</div>
<svg style="left:1179px;top:218px" width="16" height="16" viewBox="0 0 16 16"><path d="M0.5 0.5H15.5V15.5H0.5Z" fill="none" stroke="#f3b948" stroke-width="1"/><rect x="0" y="0" width="16" height="3" fill="#f3b948"/><rect x="4" y="9" width="2" height="1.6" fill="#f3b948"/><rect x="7" y="9" width="2" height="1.6" fill="#f3b948"/><rect x="10" y="9" width="2" height="1.6" fill="#f3b948"/></svg>
<div class="t" style="left:1200.5px;top:216.85px;font-size:14px;color:#1f2326;letter-spacing:0.4px">1 modified</div>
<div class="a" style="left:976px;top:245px;width:378px;height:442px;background:#dee3e7"></div>
<div class="a" style="left:976px;top:244px;width:378px;height:35px;background:#c3cdd3"></div>
<svg style="left:984px;top:254px" width="16" height="16" viewBox="0 0 16 16"><path d="M0.5 0.5H15.5V15.5H0.5Z" fill="none" stroke="#f3b948" stroke-width="1"/><rect x="0" y="0" width="16" height="3" fill="#f3b948"/><rect x="4" y="9" width="2" height="1.6" fill="#f3b948"/><rect x="7" y="9" width="2" height="1.6" fill="#f3b948"/><rect x="10" y="9" width="2" height="1.6" fill="#f3b948"/></svg>
<div class="t" style="left:1010px;top:255px;font-size:14px;color:#6a7378">TimeTracker/app/src/main/java... /TimeRecording.java</div>
<div class="a" style="left:0;top:703px;width:1366px;height:25px;background:#5f7b89"></div>
<svg style="left:1176px;top:710px" width="12" height="12" viewBox="0 0 12 12"><circle cx="4.8" cy="4.8" r="3.9" fill="none" stroke="#a2b4bd" stroke-width="1.2"/><path d="M7.6 7.6L11.2 11.2" stroke="#a2b4bd" stroke-width="1.6"/><path d="M4.8 3V6.6M3 4.8H6.6" stroke="#a2b4bd" stroke-width="1"/></svg>
<div class="t" style="left:1195px;top:709.84px;font-size:12px;color:#e3eaee;font-weight:bold;letter-spacing:-0.2px">100%</div>
<div class="a" style="left:1245px;top:705px;width:111px;height:22px;background:#4e7b9b;border:1.5px solid #3a7cc4;border-radius:2px"></div>
<div class="t" style="left:1251.7px;top:709.54px;font-size:12px;color:#2a3d4a;letter-spacing:0.2px">Provide Feedback</div>
<div class="a" style="left:0;top:728px;width:1366px;height:40px;background:#05070b"></div>
<svg style="left:16px;top:740px" width="16" height="16" viewBox="0 0 16 16"><path d="M0 1.3L5.8 0.6V7H0Z M7 0.4L16 -0.6V7H7Z M0 8.2H5.8V14.8L0 14.1Z M7 8.2H16V16.6L7 15.5Z" fill="#fff"/></svg>
<div class="a" style="left:48px;top:728px;width:344px;height:40px;background:#333335"></div>
<div class="t" style="left:60px;top:741.64px;font-size:14.6px;color:#a6a6a6;">Web und Windows durchsuchen</div>
<svg style="left:405px;top:740px" width="22" height="16" viewBox="0 0 22 16"><path d="M5.5 1.5H16.5V14.5H5.5Z" fill="none" stroke="#fff" stroke-width="1.3"/><path d="M2.5 3.5H1V12.5H2.5 M19.5 3.5H21V12.5H19.5" fill="none" stroke="#fff" stroke-width="1.3"/></svg>
<svg style="left:450px;top:732px" width="32" height="32" viewBox="0 0 32 32"><path d="M6.2 14.4 C7.5 8 12 5 16 5 C21.5 5 25.8 8.5 25.8 14 V18.3 H13.2 C13.8 20.8 16 21.8 18.5 21.8 C20.8 21.8 22.8 21 24.2 20.2 V25.2 C22.5 26.3 20 26.8 17.5 26.8 C12 26.8 8.6 23.5 8.6 18.3 C8.6 15.5 10 12.5 12.6 11 C10 11.2 7.8 12.5 6.2 14.4 Z M13.2 13.8 H19.8 C19.6 11.8 18.2 10.8 16.5 10.8 C14.8 10.8 13.5 12 13.2 13.8 Z" fill="#1578d8" fill-rule="evenodd"/></svg>
<svg style="left:0;top:0" width="1366" height="768" viewBox="0 0 1366 768"><defs><linearGradient id="fg" x1="0" y1="0" x2="1" y2="1"><stop offset="0" stop-color="#f4d378"/><stop offset="1" stop-color="#fde9a6"/></linearGradient><linearGradient id="bg2" x1="0" y1="0" x2="1" y2="1"><stop offset="0" stop-color="#2a9ee8"/><stop offset="1" stop-color="#27c6ff"/></linearGradient></defs><path d="M504.3 739 H513 L514 740.3 H525.5 V742 H504.3 Z" fill="#e8bf48"/><rect x="504.3" y="740.3" width="21.2" height="15.9" fill="url(#fg)"/><rect x="505.3" y="739.6" width="3" height="1" fill="#5ec8e8"/><path d="M508 748.9 H521.8 V756.5 H518.2 V752 H512 V756.5 H508 Z" fill="url(#bg2)"/><path d="M557.5 742 C557.5 735.5 564.5 735.5 564.5 742 M560.5 741.5 C560.5 735.8 567 735.8 567 741" fill="none" stroke="#fff" stroke-width="1.1"/><path d="M553 742.3 L574.2 740.1 V759.5 L553 756.9 Z" fill="#fff"/><path d="M556 745 L561 744.6 V749 H556 Z M562 744.5 L567 744 V749 H562 Z M556 750 H561 V754.8 L556 754.4 Z M562 750 H567 V755.4 L562 754.9 Z" fill="#05070b"/></svg>
<svg style="left:601px;top:738px" width="23" height="20" viewBox="0 0 23 20"><rect x="0.5" y="0.5" width="22" height="19" fill="#000" stroke="#aaa" stroke-width="1"/><rect x="1" y="1" width="21" height="2" fill="#ccc"/><text x="3" y="10" font-size="6" fill="#ddd" font-family="Liberation Mono">C:\_</text></svg>
<svg style="left:651px;top:737px" width="22" height="22" viewBox="0 0 22 22"><circle cx="11" cy="11" r="10" fill="#78c043"/><circle cx="11" cy="8" r="2.2" fill="none" stroke="#606060" stroke-width="1.5"/><path d="M11 4V6 M10 10 L4 21 M12 10 L18 21 M6.5 15.5 H15.5" stroke="#eee" stroke-width="1.5"/></svg>
<div class="a" style="left:687px;top:728px;width:48px;height:40px;background:#333538"></div>
<svg style="left:699px;top:736px" width="24" height="24" viewBox="0 0 24 24"><circle cx="12" cy="11.5" r="11.6" fill="#161c24"/><path d="M6.2 5.2 C2.8 9 3.4 16 9.2 19.2 M17.8 5.2 C21.2 9 20.6 16 14.8 19.2" fill="none" stroke="#1b8a82" stroke-width="1.5"/><ellipse cx="12" cy="8.6" rx="4.2" ry="4.1" fill="#21a095"/><path d="M9.8 11.5 H14.2 V14 C14.2 15 13.5 16 12 16 C10.5 16 9.8 15 9.8 14 Z" fill="#21a095"/><path d="M10.5 14.5 C9 17 7.5 17.5 6.5 17.5 M13.5 14.5 C15 17 16.5 17.5 17.5 17.5 M11.4 15 V21 M12.6 15 V21" fill="none" stroke="#21a095" stroke-width="1.1"/><circle cx="10.4" cy="9" r="0.7" fill="#161c24"/><circle cx="13.6" cy="9" r="0.7" fill="#161c24"/></svg>
<svg style="left:748px;top:736px" width="26" height="26" viewBox="0 0 26 26"><path d="M0.5 15 C-1 9 6 4 13 4 C20 4 23.5 7 22 11 C20.5 14 17 13 17 16 C17 19 13 21.5 8 21.5 C4 21.5 1.5 18 0.5 15Z" fill="#c9e0f2"/><circle cx="3.9" cy="13" r="1.8" fill="#e0383a"/><circle cx="7.8" cy="9.4" r="1.8" fill="#56c046"/><circle cx="13" cy="7.3" r="1.9" fill="#f2b820"/><circle cx="9.9" cy="14.5" r="1.3" fill="#05070b"/><path d="M11 23.6 L20.6 6" stroke="#e68a28" stroke-width="2.3" stroke-linecap="round"/><path d="M20.8 5.4 L23.4 1.4" stroke="#e4b878" stroke-width="3.2" stroke-linecap="round"/></svg>
<div class="a" style="left:446px;top:766px;width:40px;height:2px;background:#76b9ed"></div>
<div class="a" style="left:593px;top:766px;width:40px;height:2px;background:#76b9ed"></div>
<div class="a" style="left:642px;top:766px;width:40px;height:2px;background:#76b9ed"></div>
<div class="a" style="left:687px;top:766px;width:48px;height:2px;background:#76b9ed"></div>
<div class="a" style="left:740px;top:766px;width:40px;height:2px;background:#76b9ed"></div>
<svg style="left:0;top:0" width="1366" height="768" viewBox="0 0 1366 768"><path d="M1172.5 751 L1178 745.2 L1183.5 751" fill="none" stroke="#fff" stroke-width="1.1"/><path d="M1195.2 742 V745 M1198.4 742 V745" stroke="#fff" stroke-width="1"/><path d="M1194 745 H1199.6 V747 C1199.6 749 1198.5 749.6 1196.8 749.6 C1195.1 749.6 1194 749 1194 747 Z" fill="none" stroke="#fff" stroke-width="1"/><path d="M1196.8 749.6 V753.5" stroke="#fff" stroke-width="1"/><path d="M1199.5 745.5 H1208.8 V752.2 H1199" fill="none" stroke="#fff" stroke-width="1"/><rect x="1209" y="747.2" width="1.2" height="3.2" fill="#fff"/><rect x="1198.8" y="749.2" width="2.6" height="2.6" fill="#fff"/><path d="M1221.6 755 A11.4 11.4 0 0 1 1233 743.6 M1224.2 755 A8.8 8.8 0 0 1 1233 746.2 M1226.8 755 A6.2 6.2 0 0 1 1233 748.8" fill="none" stroke="#fff" stroke-width="1"/><rect x="1230.3" y="752.3" width="2.7" height="2.7" fill="#fff"/><path d="M1242.5 745.5 H1244.5 L1248.2 742.5 V753.5 L1244.5 750.5 H1242.5 Z" fill="none" stroke="#fff" stroke-width="1"/><path d="M1250.8 745.5 L1255.6 750.3 M1255.6 745.5 L1250.8 750.3" stroke="#fff" stroke-width="1"/><path d="M1266.5 740.5 H1281.5 V752.5 H1276.5 L1274 755.5 L1271.5 752.5 H1266.5 Z" fill="none" stroke="#fff" stroke-width="1.1"/><path d="M1269 743.5 H1279 M1269 745.8 H1279 M1269 748.1 H1276" stroke="#fff" stroke-width="1"/></svg>
<div class="t" style="left:1310px;top:733.03px;font-size:11.3px;color:#fff;letter-spacing:-0.3px">03:05</div>
<div class="t" style="left:1296.5px;top:749.83px;font-size:11.3px;color:#fff;letter-spacing:-0.4px">06.06.2016</div>
<div class="a" style="left:1361px;top:728px;width:1px;height:40px;background:#3a3a3a"></div>
</body></html>
